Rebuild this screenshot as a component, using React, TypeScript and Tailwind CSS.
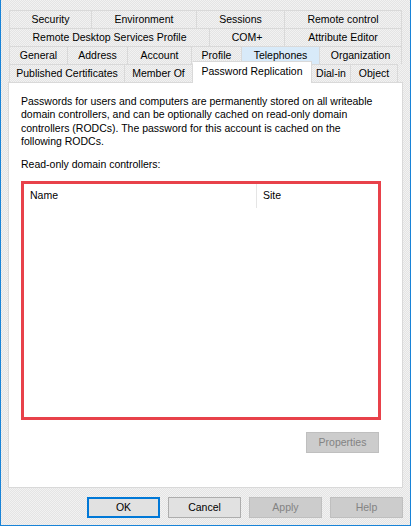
const tabRows = [
  [
    { label: 'Security', w: 'w-[83px]' },
    { label: 'Environment', w: 'w-[105px]' },
    { label: 'Sessions', w: 'w-[88px]' },
    { label: 'Remote control', w: 'w-[117px]' },
  ],
  [
    { label: 'Remote Desktop Services Profile', w: 'w-[201px]' },
    { label: 'COM+', w: 'w-[75px]' },
    { label: 'Attribute Editor', w: 'w-[117px]' },
  ],
  [
    { label: 'General', w: 'w-[59px]' },
    { label: 'Address', w: 'w-[60px]' },
    { label: 'Account', w: 'w-[64px]' },
    { label: 'Profile', w: 'w-[50px]' },
    { label: 'Telephones', w: 'w-[78px]', hover: true },
    { label: 'Organization', w: 'w-[82px]' },
  ],
]

const bottomTabs = [
  { label: 'Published Certificates', w: 'w-[116px]' },
  { label: 'Member Of', w: 'w-[68px]' },
  { label: 'Password Replication', w: 'w-[119px]', active: true },
  { label: 'Dial-in', w: 'w-[39px]' },
  { label: 'Object', w: 'w-[47px]' },
]

const intro = [
  'Passwords for users and computers are permanently stored on all writeable',
  'domain controllers, and can be optionally cached on read-only domain',
  'controllers (RODCs). The password for this account is cached on the',
  'following RODCs.',
]

const checker =
  'bg-[repeating-conic-gradient(#f2f2f2_0_25%,#e4e4e4_0_50%)] bg-[length:2px_2px]'

function Tab({ label, w, hover, first }: { label: string; w: string; hover?: boolean; first?: boolean }) {
  return (
    <div
      className={`${w} h-[18px] flex items-center justify-center border-t border-r border-[#d9d9d9] ${first ? 'border-l' : ''} ${hover ? 'bg-[#d8eaf9]' : ''}`}
    >
      {label}
    </div>
  )
}

function Button({ children, variant }: { children: string; variant: 'default' | 'normal' | 'disabled' }) {
  const styles = {
    default: 'border-2 border-[#0078d7] bg-[#e1e1e1] text-black',
    normal: 'border border-[#adadad] bg-[#e1e1e1] text-black',
    disabled: 'border border-[#bfbfbf] bg-[#cccccc] text-[#838383]',
  }
  return (
    <div className={`w-[73px] h-[21px] flex items-center justify-center ${styles[variant]}`}>
      {children}
    </div>
  )
}

export default function App() {
  return (
    <div
      className={`w-[411px] h-[526px] flex flex-col px-[7px] pt-[10px] border-x border-b border-[#1883d7] ${checker} font-['Liberation_Sans',Arial,sans-serif] text-[10.5px] text-black`}
    >
      {/* Tab strip */}
      <div className="ml-px flex flex-col">
        {tabRows.map((row, i) => (
          <div key={i} className="flex">
            {row.map((t, j) => (
              <Tab key={t.label} {...t} first={j === 0} />
            ))}
          </div>
        ))}
        <div className="flex h-[18px] items-end">
          {bottomTabs.map((t, j) =>
            t.active ? (
              <div
                key={t.label}
                className={`${t.w} relative z-10 h-[22px] -mb-px flex items-center justify-center bg-white border-t border-r border-[#d9d9d9] pb-[2px]`}
              >
                {t.label}
              </div>
            ) : (
              <Tab key={t.label} label={t.label} w={t.w} first={j === 0} />
            )
          )}
        </div>
      </div>

      {/* Page */}
      <div className="flex-1 bg-white border border-[#d9d9d9] pl-[12px] pt-[12px] flex flex-col">
        <div className="leading-[13.3px]">
          {intro.map((line) => (
            <p key={line} className="whitespace-nowrap">
              {line}
            </p>
          ))}
        </div>
        <p className="mt-[10px] leading-[13px]">Read-only domain controllers:</p>

        <div className="mt-[10px] w-[360px] h-[239px] border-[3px] border-[#e8414a] bg-white">
          <div className="flex h-[24px]">
            <div className="w-[233px] flex items-center pl-[6px] border-r border-[#e5e5e5]">Name</div>
            <div className="flex items-center pl-[6px]">Site</div>
          </div>
        </div>

        <div className="mt-[12px] w-[360px] flex justify-end pr-[2px]">
          <Button variant="disabled">Properties</Button>
        </div>
      </div>

      {/* Dialog buttons */}
      <div className="mt-[9px] mb-[7px] flex justify-end gap-[8px]">
        <Button variant="default">OK</Button>
        <Button variant="normal">Cancel</Button>
        <Button variant="disabled">Apply</Button>
        <Button variant="disabled">Help</Button>
      </div>
    </div>
  )
}
